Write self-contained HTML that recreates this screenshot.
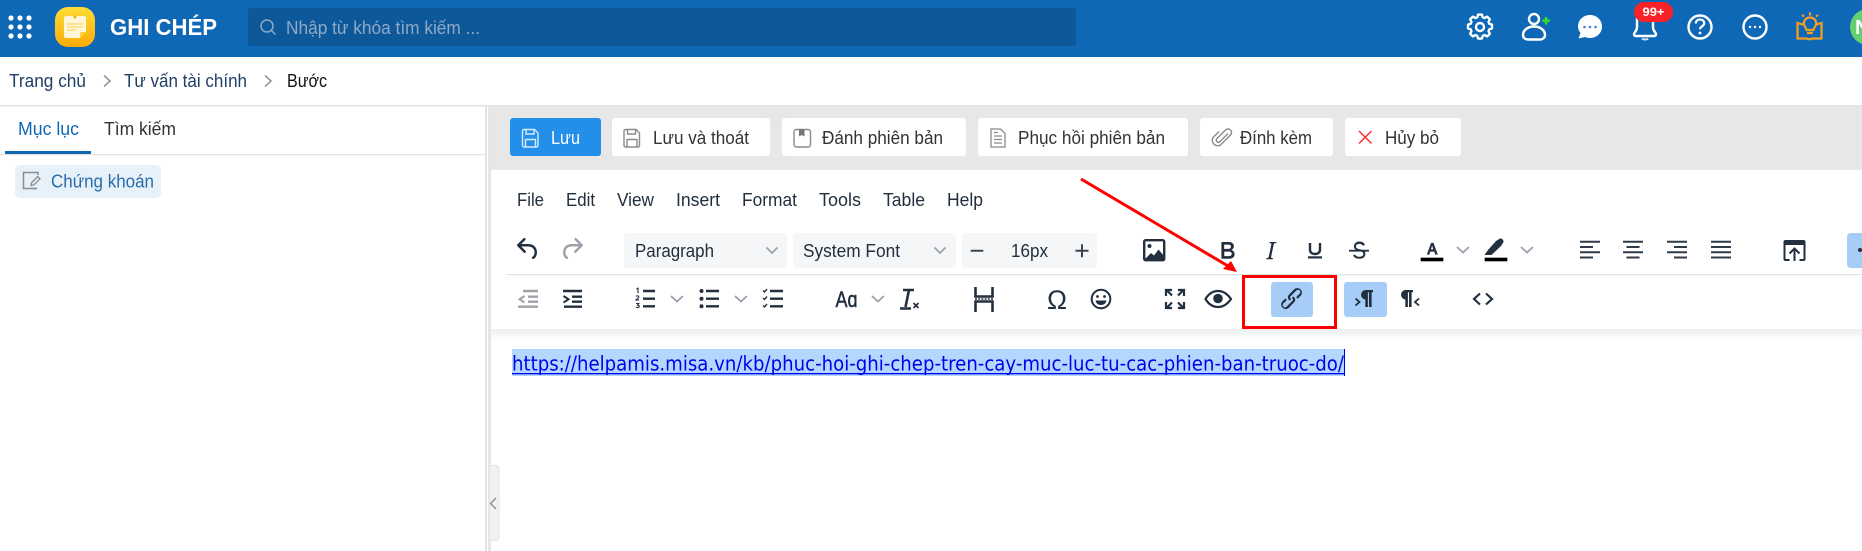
<!DOCTYPE html>
<html lang="vi"><head><meta charset="utf-8"><title>Ghi chép</title>
<style>
html,body{margin:0;padding:0;background:#fff;width:1862px;height:551px;overflow:hidden}
svg{display:block}
text{font-family:"Liberation Sans",Arial,sans-serif;font-size:18px;fill:#222f3e}
.ic{fill:#222f3e}
.ch{fill:none;stroke:#9aa1aa;stroke-width:1.8}
.bi{fill:none;stroke:#8a8a8a;stroke-width:1.5}
.w{fill:none;stroke:#fff;stroke-width:2.4}
</style></head><body>
<svg width="1862" height="551" viewBox="0 0 1862 551" xmlns="http://www.w3.org/2000/svg">
<defs>
<linearGradient id="lg" x1="0" y1="0" x2="0" y2="1"><stop offset="0" stop-color="#ffdc35"/><stop offset="1" stop-color="#fdab08"/></linearGradient>
<linearGradient id="sh" x1="0" y1="0" x2="0" y2="1"><stop offset="0" stop-color="#eceeef"/><stop offset="1" stop-color="#fff"/></linearGradient>
</defs>
<!-- header -->
<rect width="1862" height="57" fill="#0e68b5"/>
<g fill="#fff"><circle cx="11" cy="18" r="2.6"/><circle cx="20" cy="18" r="2.6"/><circle cx="29" cy="18" r="2.6"/><circle cx="11" cy="27" r="2.6"/><circle cx="20" cy="27" r="2.6"/><circle cx="29" cy="27" r="2.6"/><circle cx="11" cy="36" r="2.6"/><circle cx="20" cy="36" r="2.6"/><circle cx="29" cy="36" r="2.6"/></g>
<rect x="55" y="7" width="40" height="40" rx="13" fill="url(#lg)"/>
<path d="M66 16h18a2 2 0 0 1 2 2v14l-6 6H66a2 2 0 0 1-2-2V18a2 2 0 0 1 2-2z" fill="#fff6d8"/>
<path d="M80 38l6-6h-4a2 2 0 0 0-2 2z" fill="#ffd23a"/>
<circle cx="75" cy="17" r="1.500" fill="#f5a810"/>
<path d="M67 24h16M67 27h16M67 30h9" stroke="#fbd76a" stroke-width="1.200"/>
<text x="110" y="35" style="font-size:23px;font-weight:700;fill:#fff" textLength="107" lengthAdjust="spacingAndGlyphs">GHI CHÉP</text>
<rect x="248" y="8" width="828" height="38" rx="3" fill="#0c5899"/>
<circle cx="267" cy="26" r="6" fill="none" stroke="#8fa9c6" stroke-width="1.500"/><path d="M271.500 30.500l4 4" stroke="#8fa9c6" stroke-width="1.500"/>
<text x="286" y="34" style="fill:#8fa9c6" textLength="194" lengthAdjust="spacingAndGlyphs">Nhập từ khóa tìm kiếm ...</text>
<!-- gear -->
<path d="M1477.500 15h5l1 3.500 2.500 1 3.200-1.800 3.500 3.500-1.800 3.200 1 2.500 3.500 1v5l-3.500 1-1 2.500 1.800 3.200-3.500 3.500-3.200-1.800-2.500 1-1 3.500h-5l-1-3.500-2.500-1-3.200 1.800-3.500-3.500 1.800-3.200-1-2.500-3.500-1v-5l3.500-1 1-2.500-1.800-3.200 3.500-3.500 3.200 1.800 2.500-1z" fill="none" stroke="#fff" stroke-width="3" transform="translate(325.600 2.820) scale(.78)" stroke-linejoin="round"/>
<circle cx="1480" cy="27" r="4" class="w"/>
<!-- user add -->
<circle cx="1534" cy="19" r="5" class="w"/>
<path d="M1523 35c0-5 5-8.500 11-8.500s11 3.500 11 8.500c0 3-2.500 4.500-5 4.500h-12c-2.500 0-5-1.500-5-4.500z" class="w"/>
<path d="M1546 17v7.500M1542.300 20.700h7.500" stroke="#39d92f" stroke-width="2.600"/>
<!-- chat -->
<path d="M1590 15c6.800 0 12 5 12 11.500s-5.200 11.500-12 11.500c-2 0-3.600-.5-5-1l-6.500 1.500 2-5.500c-1.600-2-2.500-4-2.500-6.500 0-6.500 5.200-11.500 12-11.500z" fill="#fff"/>
<g fill="#4d7fe8"><circle cx="1584.500" cy="27" r="1.300"/><circle cx="1590" cy="27" r="1.300"/><circle cx="1595.500" cy="27" r="1.300"/></g>
<!-- bell -->
<path d="M1637 18v9c0 4-2.500 5-3 7 0 1.500 1 2 2 2h18c1 0 2-.5 2-2-.5-2-3-3-3-7v-9" class="w"/>
<path d="M1642 38.500c1 1.300 5 1.300 6 0" stroke="#cfe0f0" stroke-width="2" fill="none"/>
<rect x="1634" y="2" width="39" height="20" rx="10" fill="#fa2229"/>
<text x="1642.500" y="16" style="font-size:12px;font-weight:700;fill:#fff" textLength="22" lengthAdjust="spacingAndGlyphs">99+</text>
<!-- help -->
<circle cx="1700" cy="27" r="11.500" class="w"/>
<path d="M1695.800 23.500c0-2.600 2-4 4.200-4s4.200 1.400 4.200 3.800c0 3-4.200 3-4.200 6" fill="none" stroke="#fff" stroke-width="2.200"/><circle cx="1700" cy="33" r="1.400" fill="#fff"/>
<!-- more -->
<circle cx="1755" cy="27" r="11.500" class="w"/>
<g fill="#fff"><circle cx="1750" cy="27" r="1.200"/><circle cx="1755" cy="27" r="1.200"/><circle cx="1760" cy="27" r="1.200"/></g>
<!-- bulb book -->
<g fill="none" stroke="#f59e1f" stroke-width="2.200"><path d="M1803 24.500l-5.500-1.500v15.500h9l3 .8 3-.8h9V23l-5.500 1.500"/><path d="M1803.800 23.500c0-3.500 2.700-6 6.200-6s6.200 2.500 6.200 6c0 2.800-2.400 3.800-2.700 6.500h-7c-.3-2.700-2.700-3.700-2.700-6.500z"/><path d="M1807 33h6M1810 12.500v3M1802 15l2 1.500M1818 15l-2 1.500"/></g>
<!-- avatar -->
<circle cx="1868" cy="27" r="18" fill="#66cf72"/>
<text x="1855" y="34" style="font-size:20px;font-weight:700;fill:#fff">N</text>

<!-- breadcrumb -->
<text x="9" y="87" style="fill:#1f3f66" textLength="77" lengthAdjust="spacingAndGlyphs">Trang chủ</text>
<path d="M104 75.500l6 5.500-6 5.500" class="bi"/>
<text x="124" y="87" style="fill:#1f3f66" textLength="123" lengthAdjust="spacingAndGlyphs">Tư vấn tài chính</text>
<path d="M265 75.500l6 5.500-6 5.500" class="bi"/>
<text x="287" y="87" style="fill:#111" textLength="40" lengthAdjust="spacingAndGlyphs">Bước</text>
<rect x="0" y="105" width="1862" height="1.500" fill="#e2e2e2"/>

<!-- sidebar -->
<text x="18" y="135" style="fill:#0e68b5" textLength="61" lengthAdjust="spacingAndGlyphs">Mục lục</text>
<text x="104" y="135" style="fill:#333" textLength="72" lengthAdjust="spacingAndGlyphs">Tìm kiếm</text>
<rect x="0" y="154" width="485" height="1.200" fill="#e0e0e0"/>
<rect x="5" y="151" width="86" height="3" fill="#0e68b5"/>
<rect x="15" y="165" width="146" height="33" rx="5" fill="#e7f1fa"/>
<path d="M38 175v-2.500H23.500v16H37" fill="none" stroke="#8c8c8c" stroke-width="1.500"/><path d="M31 185.500l.7-3 6-6 2.300 2.300-6 6zM37 188.500h-5" fill="none" stroke="#8c8c8c" stroke-width="1.300"/>
<text x="51" y="187.500" style="fill:#2b6cab" textLength="103" lengthAdjust="spacingAndGlyphs">Chứng khoán</text>
<rect x="485" y="106" width="2" height="445" fill="#e3e3e3"/>
<rect x="488" y="106" width="3" height="445" fill="#e6e6e6"/>

<!-- action bar -->
<rect x="491" y="106" width="1371" height="64" fill="#e7e7e7"/>
<path d="M491 551V176a6 6 0 0 1 6-6H1862V551z" fill="#fff"/>
<rect x="510" y="118" width="91" height="38" rx="3" fill="#248fe9"/>
<g fill="#fff"><rect x="612" y="118" width="158" height="38" rx="3"/><rect x="782" y="118" width="184" height="38" rx="3"/><rect x="978" y="118" width="210" height="38" rx="3"/><rect x="1200" y="118" width="133" height="38" rx="3"/><rect x="1345" y="118" width="116" height="38" rx="3"/></g>
<g fill="none" stroke="#d6ebfc" stroke-width="1.400"><path d="M524 129.500h10.500l3.500 3.500v12.500a1.500 1.500 0 0 1-1.500 1.500h-12.500a1.500 1.500 0 0 1-1.500-1.500V131a1.500 1.500 0 0 1 1.500-1.500z"/><path d="M526 129.500v4.500h8v-4.500M525.500 147v-7.500h10v7.500"/></g>
<text x="551" y="144" style="fill:#fff" textLength="29" lengthAdjust="spacingAndGlyphs">Lưu</text>
<g fill="none" stroke="#8a8a8a" stroke-width="1.400"><path d="M625.500 129.500h10.500l3.500 3.500v12.500a1.500 1.500 0 0 1-1.500 1.500h-12.500a1.500 1.500 0 0 1-1.500-1.500V131a1.500 1.500 0 0 1 1.500-1.500z"/><path d="M627.500 129.500v4.500h8v-4.500M627 147v-7.500h10v7.500"/></g>
<text x="653" y="144" style="fill:#333" textLength="96" lengthAdjust="spacingAndGlyphs">Lưu và thoát</text>
<rect x="794" y="129.500" width="16.500" height="17.500" rx="2.500" fill="none" stroke="#8a8a8a" stroke-width="1.400"/><path d="M799 129.500h5.500v7l-2.700-1.500-2.800 1.500z" fill="#777"/>
<text x="822" y="144" style="fill:#333" textLength="121" lengthAdjust="spacingAndGlyphs">Đánh phiên bản</text>
<path d="M991 129h9.500l4.500 4.500V147h-14zM994 136h8M994 139.500h8M994 143h8M994 132.500h4" fill="none" stroke="#8a8a8a" stroke-width="1.300"/>
<text x="1018" y="144" style="fill:#333" textLength="147" lengthAdjust="spacingAndGlyphs">Phục hồi phiên bản</text>
<path d="M1228 133.500l-8.500 8.500a2.200 2.200 0 0 1-3-3l9-9a3.500 3.500 0 0 1 5 5l-10 10a5.500 5.500 0 0 1-7.500-7.500l6-6" fill="none" stroke="#8a8a8a" stroke-width="1.400"/>
<text x="1240" y="144" style="fill:#333" textLength="72" lengthAdjust="spacingAndGlyphs">Đính kèm</text>
<path d="M1359 131l12.500 12.500M1371.500 131L1359 143.500" stroke="#fb2c2c" stroke-width="1.500"/>
<text x="1385" y="144" style="fill:#333" textLength="54" lengthAdjust="spacingAndGlyphs">Hủy bỏ</text>

<!-- menu -->
<text x="517" y="206" textLength="27" lengthAdjust="spacingAndGlyphs">File</text>
<text x="566" y="206" textLength="29" lengthAdjust="spacingAndGlyphs">Edit</text>
<text x="617" y="206" textLength="37" lengthAdjust="spacingAndGlyphs">View</text>
<text x="676" y="206" textLength="44" lengthAdjust="spacingAndGlyphs">Insert</text>
<text x="742" y="206" textLength="55" lengthAdjust="spacingAndGlyphs">Format</text>
<text x="819" y="206" textLength="42" lengthAdjust="spacingAndGlyphs">Tools</text>
<text x="883" y="206" textLength="42" lengthAdjust="spacingAndGlyphs">Table</text>
<text x="947" y="206" textLength="36" lengthAdjust="spacingAndGlyphs">Help</text>

<!-- row 1 -->
<g class="ic">
<path transform="translate(513.250 234) scale(1.250)" d="M6.400 8H12c3.700 0 6.200 2 6.800 5.100.6 2.700-.4 5.600-2.300 6.800a1 1 0 0 1-1-1.800c1.100-.7 1.800-2.700 1.400-4.600-.5-2.100-2.100-3.500-4.900-3.500H6.400l3.300 3.300a1 1 0 1 1-1.400 1.400l-5-5a1 1 0 0 1 0-1.400l5-5a1 1 0 0 1 1.400 1.400L6.400 8Z"/>
<path transform="translate(556.750 234) scale(1.250)" fill="#9ea3aa" d="M17.600 8H12c-3.700 0-6.200 2-6.800 5.100-.6 2.700.4 5.600 2.300 6.800a1 1 0 0 0 1-1.800c-1.100-.7-1.800-2.700-1.400-4.600.5-2.100 2.100-3.500 4.900-3.500h5.600l-3.300 3.300a1 1 0 1 0 1.400 1.400l5-5a1 1 0 0 0 0-1.400l-5-5a1 1 0 0 0-1.400 1.400L17.600 8Z"/>
</g>
<rect x="624" y="233" width="163" height="35" rx="4" fill="#f5f6f7"/>
<rect x="793" y="233" width="163" height="35" rx="4" fill="#f5f6f7"/>
<rect x="962" y="233" width="135" height="35" rx="4" fill="#f5f6f7"/>
<text x="635" y="257" textLength="79" lengthAdjust="spacingAndGlyphs">Paragraph</text>
<path d="M766.500 247.500l5.500 5.500 5.500-5.500" class="ch"/>
<text x="803" y="257" textLength="97" lengthAdjust="spacingAndGlyphs">System Font</text>
<path d="M934.500 247.500l5.500 5.500 5.500-5.500" class="ch"/>
<rect x="970.500" y="249.700" width="13" height="2" rx="1" fill="#3a4654"/>
<text x="1011" y="257" textLength="37" lengthAdjust="spacingAndGlyphs">16px</text>
<path d="M1075.500 250.700h13M1082 244.200v13" stroke="#3a4654" stroke-width="2"/>
<!-- image -->
<rect x="1144.200" y="240.200" width="20" height="20" rx="1.500" fill="none" stroke="#222f3e" stroke-width="2.400"/>
<circle cx="1149.500" cy="246" r="2" class="ic"/><path d="M1145 259l6-6 3 2.500 4.500-6 5.500 6.500v3z" class="ic"/>
<g class="ic">
<path transform="translate(1213 236) scale(1.200)" d="M7.800 19c-.3 0-.5 0-.6-.2l-.2-.5V5.700c0-.2 0-.4.2-.5l.6-.2h5c1.500 0 2.700.3 3.500 1 .7.6 1.100 1.400 1.100 2.500a3 3 0 0 1-.6 1.900c-.4.6-1 1-1.600 1.200.4.1.9.3 1.300.6s.8.7 1 1.200c.4.4.5 1 .5 1.600 0 1.300-.4 2.300-1.300 3-.8.7-2.100 1-3.800 1H7.800Zm5-8.300c.6 0 1.200-.1 1.600-.5.4-.3.6-.7.6-1.300 0-1.100-.8-1.700-2.300-1.700H9.300v3.500h3.400Zm.5 6c.7 0 1.300-.1 1.700-.4.4-.4.6-.9.6-1.500s-.2-1-.7-1.400c-.4-.3-1-.4-2-.4H9.400v3.800h4Z"/>
<path transform="translate(1256.400 236.400) scale(1.200)" d="m16.700 4.700-.1.9h-.3c-.6 0-1 0-1.400.3-.3.3-.4.600-.5 1.100l-2.100 9.800v.6c0 .5.4.8 1.400.8h.2l-.2.8H8l.2-.8h.2c1.100 0 1.800-.5 2-1.500l2-9.800.1-.5c0-.6-.4-.8-1.400-.8h-.3l.2-.9h5.800Z"/>
<path transform="translate(1344.600 236) scale(1.200)" d="M15.600 8.500c-.5-.7-1-1.100-1.300-1.300-.6-.4-1.300-.6-2-.6-2.700 0-2.800 1.700-2.800 2.100 0 1.600 1.800 2 3.200 2.300 4.400.9 4.600 2.800 4.600 3.900 0 1.400-.7 4.100-5 4.100A6.200 6.200 0 0 1 7 16.400l1.500-1.100c.4.6 1.600 2 3.700 2 1.600 0 2.500-.4 3-1 .3-.4.4-.9.4-1.500 0-1.600-2-2-3.600-2.300-1.400-.3-4.200-.9-4.200-3.900 0-.9.3-1.900 1-2.600.6-.7 1.700-1.400 3.500-1.400 1.200 0 2.300.3 3.300 1 .4.3.9.7 1.400 1.400l-1.400 1Z"/>
</g>
<path d="M1310 243v6.500c0 3 2 4.500 5 4.500s5-1.500 5-4.500V243" fill="none" stroke="#222f3e" stroke-width="2.400"/>
<rect x="1308" y="256.300" width="14" height="2.200" class="ic"/>
<rect x="1349" y="249.800" width="20" height="1.800" class="ic"/>
<!-- font color -->
<path d="M1427 254.500l4.200-11.500h2.200l4.200 11.500h-2.200l-1-3h-4.200l-1 3zm3.700-5h2.800l-1.400-4.200z" class="ic" stroke="#222f3e" stroke-width=".3"/>
<rect x="1420.500" y="257.500" width="23" height="4" fill="#000" stroke="#c8c8c8" stroke-width=".6"/>
<path d="M1457 247l6 5.500 6-5.500" class="ch"/>
<!-- highlighter -->
<path d="M1484.500 255l3.500-5 8-9 4-2.500c1.500-.5 4 2 3.500 3.500l-2.500 4-9 8.500-1 .5h-6.500z" class="ic"/>
<rect x="1484.500" y="257.500" width="23" height="4" fill="#000" stroke="#c8c8c8" stroke-width=".6"/>
<path d="M1521 247l6 5.500 6-5.500" class="ch"/>
<!-- aligns -->
<g stroke="#2f3b4a" stroke-width="2">
<path d="M1580 241.700h20M1580 247h13M1580 252.300h20M1580 257.500h13"/>
<path d="M1623 241.700h20M1626.500 247h13M1623 252.300h20M1626.500 257.500h13"/>
<path d="M1667 241.700h20M1674 247h13M1667 252.300h20M1674 257.500h13"/>
<path d="M1711 241.700h20M1711 247h20M1711 252.300h20M1711 257.500h20"/>
</g>
<!-- upload -->
<path d="M1785.500 240h18a2 2 0 0 1 2 2v17a2 2 0 0 1-2 2h-4v-2h4v-14h-18v14h4v2h-4a2 2 0 0 1-2-2v-17a2 2 0 0 1 2-2z" class="ic"/>
<path d="M1794.500 261v-11.500M1789.500 253.500l5-5 5 5" fill="none" stroke="#222f3e" stroke-width="2"/>
<rect x="1847" y="233" width="20" height="35" rx="4" fill="#a6cdf7"/>
<circle cx="1860" cy="250" r="2" class="ic"/>

<rect x="506" y="274" width="1356" height="1.200" fill="#e2e3e5"/>
<!-- row 2 -->
<g stroke-width="2.400" fill="none">
<path stroke="#9ea3aa" d="M523 291h15M528 296.700h10M528 301.700h10M518 306.700h20"/>
<path stroke="#9ea3aa" stroke-width="2" d="M524.500 296l-5 3.300 5 3.300"/>
<g stroke="#222f3e">
<path d="M563 291h19M572 296.700h10M572 301.700h10M564 306.700h18"/>
<path stroke-width="2" d="M563.500 296l5 3.300-5 3.300"/>
<path d="M643 291h12M643 298.700h12M643 306.300h12"/>
<path d="M706 291h13M706 298.700h13M706 306.300h13"/>
<path d="M770 291h13M770 298.700h13M770 306.300h13"/>
</g>
</g>
<g stroke="#222f3e" fill="none" stroke-width="1.100"><path d="M636.500 289l1.500-.8v5"/><path d="M636 296.500c.6-1 2.800-.8 2.800.4 0 1-2 2-2.800 3h3"/><path d="M636 303.500h2.800l-1.300 1.700c1.300 0 1.800.6 1.800 1.200 0 1.400-2.300 1.400-3.300.7"/>
<path d="M763 290.500l1.500 1.500 2.500-3M763 298l1.500 1.500 2.500-3M763 305.500l1.500 1.500 2.500-3" stroke-width="1.400"/></g>
<g class="ic"><circle cx="701.500" cy="291" r="2"/><circle cx="701.500" cy="298.700" r="2"/><circle cx="701.500" cy="306.300" r="2"/></g>
<path d="M671 296l6 5.500 6-5.500M735 296l6 5.500 6-5.500M872 296l6 5.500 6-5.500" class="ch"/>
<text x="835.500" y="307" style="font-size:22px;stroke:#222f3e;stroke-width:.5" textLength="22" lengthAdjust="spacingAndGlyphs">Aɑ</text>
<path d="M903 290h11M909 290l-3.500 17M900 308.500h11" fill="none" stroke="#222f3e" stroke-width="2.600"/><path d="M913.500 303l5 5M918.500 303l-5 5" stroke="#222f3e" stroke-width="1.600"/>
<path d="M975.500 287v9.500h17V287M975.500 312v-10.500h17V312" stroke="#222f3e" stroke-width="2.600" fill="none"/>
<path d="M975 299h18" stroke="#222f3e" stroke-width="1.500" stroke-dasharray="2 1.200"/>
<text x="1047" y="309" style="font-size:27px" textLength="20" lengthAdjust="spacingAndGlyphs">Ω</text>
<circle cx="1101" cy="299" r="9.300" fill="none" stroke="#222f3e" stroke-width="2"/><circle cx="1097.500" cy="296.500" r="1.400" class="ic"/><circle cx="1104.500" cy="296.500" r="1.400" class="ic"/><path d="M1095.500 300.500h11c-.5 3-2.800 4.500-5.500 4.500s-5-1.500-5.500-4.500z" class="ic"/>
<path d="M1166 296v-6h6M1178 290h6v6M1184 302v6h-6M1172 308h-6v-6M1167 290.500l5 5M1183 290.500l-5 5M1183 307.500l-5-5M1167 307.500l5-5" fill="none" stroke="#222f3e" stroke-width="2.200"/>
<path d="M1205.500 299c3-5 7.500-8 12.500-8s9.500 3 13 8c-3.500 5-8 8-13 8s-9.500-3-12.500-8z" fill="none" stroke="#222f3e" stroke-width="2.200"/><circle cx="1218" cy="298.500" r="4.800" class="ic"/>
<!-- active buttons -->
<rect x="1271" y="282" width="42" height="35" rx="3" fill="#a6cdf7"/>
<rect x="1344" y="282" width="43" height="35" rx="3" fill="#a6cdf7"/>
<path class="ic" transform="translate(1277.500 284.500) scale(1.170)" d="M6.200 12.300a1 1 0 0 1 1.400 1.400l-2 2a2 2 0 1 0 2.600 2.800l4.800-4.800a1 1 0 0 0 0-1.400 1 1 0 1 1 1.400-1.300 2.900 2.900 0 0 1 0 4L9.600 20a3.900 3.900 0 0 1-5.500-5.500l2-2Zm11.600-.6a1 1 0 0 1-1.400-1.400l2-2a2 2 0 1 0-2.600-2.800L11 10.300a1 1 0 0 0 0 1.400 1 1 0 1 1-1.400 1.300 2.900 2.900 0 0 1 0-4L14.400 4a3.900 3.900 0 0 1 5.500 5.500l-2 2Z"/>
<path class="ic" d="M1365 290h8v2.200h-1.400V307h-2.600v-14.800h-1.100V307h-2.600v-7.500a4.800 4.800 0 0 1 -.3-9.500z"/>
<path d="M1355.500 298.500l4 3.500-4 3.500" fill="none" stroke="#222f3e" stroke-width="1.800"/>
<path class="ic" d="M1405 290h8v2.200h-1.400V307h-2.600v-14.800h-1.100V307h-2.600v-7.500a4.800 4.800 0 0 1 -.3-9.500z"/>
<path d="M1419 298.500l-4 3.500 4 3.500" fill="none" stroke="#222f3e" stroke-width="1.800"/>
<path d="M1480 293.500l-6 5.500 6 5.500M1486 293.500l6 5.500-6 5.500" fill="none" stroke="#222f3e" stroke-width="2.200"/>
<!-- toolbar shadow -->
<rect x="491" y="329" width="1371" height="11" fill="url(#sh)"/>

<!-- content -->
<rect x="512" y="349" width="833" height="27" fill="#b3d7ff"/>
<text x="512" y="370.500" style="font-family:'DejaVu Sans',sans-serif;font-size:20px;fill:#0000ee" textLength="832" lengthAdjust="spacingAndGlyphs">https://helpamis.misa.vn/kb/phuc-hoi-ghi-chep-tren-cay-muc-luc-tu-cac-phien-ban-truoc-do/</text>
<rect x="512" y="373" width="833" height="1.300" fill="#0000ee"/>
<rect x="1344" y="349" width="1" height="27" fill="#0000ee"/>

<!-- collapse handle -->
<rect x="489.500" y="465.500" width="9.500" height="75" rx="3" fill="#f1f1f1" stroke="#e4e4e4"/>
<path d="M496 498l-5.500 5.500 5.500 5.500" fill="none" stroke="#888" stroke-width="1.300"/>

<!-- annotation -->
<rect x="1243.500" y="276.500" width="92" height="51" fill="none" stroke="#f00" stroke-width="3"/>
<path d="M1081 179l147 87" stroke="#f00" stroke-width="3"/>
<path d="M1237 272l-14-3 8-8z" fill="#f00"/>
</svg>
</body></html>
